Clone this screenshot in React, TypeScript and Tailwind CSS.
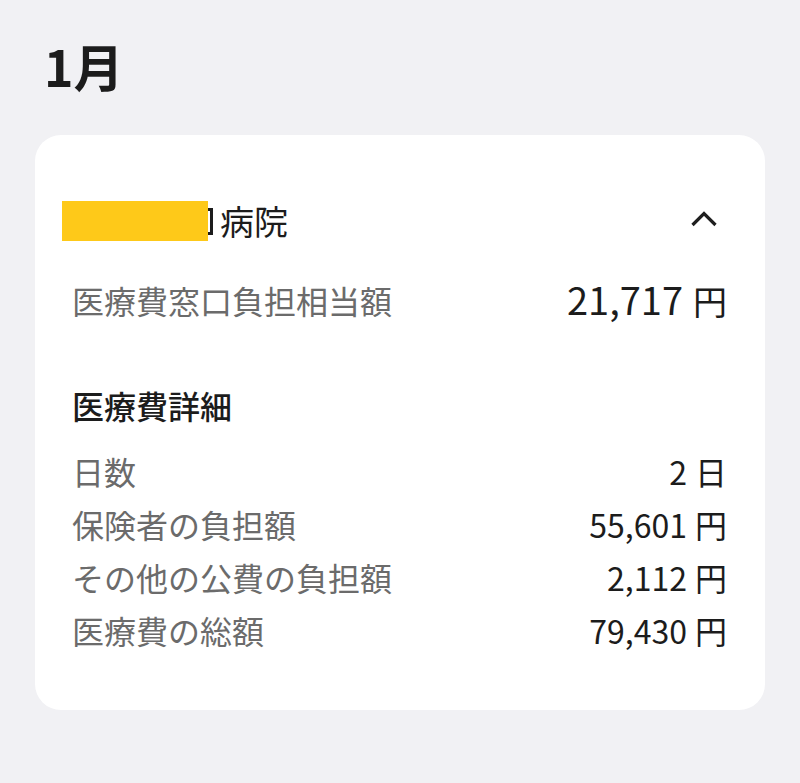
const rows = [
  { label: '日数', value: '2', unit: '日' },
  { label: '保険者の負担額', value: '55,601', unit: '円' },
  { label: 'その他の公費の負担額', value: '2,112', unit: '円' },
  { label: '医療費の総額', value: '79,430', unit: '円' },
];

function ChevronUp() {
  return (
    <svg width="28" height="18" viewBox="0 0 28 18" fill="none">
      <polyline points="2.5,15 14,3.5 25.5,15" stroke="#1f1f1f" strokeWidth="3.2" />
    </svg>
  );
}

export default function App() {
  return (
    <div
      className="min-h-[783px] w-[800px] bg-[#f1f1f4] px-[35px] pt-[33px] text-[#1c1c1c]"
      style={{ fontFamily: '"Noto Sans CJK JP", "Noto Sans", sans-serif' }}
    >
      <h1 className="pl-[9px] text-[50px] font-bold leading-[64px]">1月</h1>

      <div className="mt-[38px] rounded-[26px] bg-white pt-[62px] pb-[53px] pl-[37px] pr-[38px]">
        <div className="flex h-[48px] items-center justify-between">
          <div className="flex items-center text-[34px] leading-[48px]">
            <span className="inline-block h-[40px] w-[146px] -ml-[10px] bg-[#fec919]" />
            <span className="inline-block h-[27px] w-[5px] border-y-[3px] border-r-[3px] border-[#1c1c1c]" />
            <span className="ml-[7px]">病院</span>
          </div>
          <div className="mr-[9px] -mt-[4px]">
            <ChevronUp />
          </div>
        </div>

        <div className="mt-[31px] flex h-[48px] items-center justify-between">
          <span className="text-[32px] leading-[48px] text-[#6b6b6b]">医療費窓口負担相当額</span>
          <span className="text-[38px] leading-[48px]">
            21,717<span className="ml-[10px] text-[34px]">円</span>
          </span>
        </div>

        <div className="mt-[57px] h-[48px] text-[32px] font-medium leading-[48px]">医療費詳細</div>

        <div className="mt-[16px]">
          {rows.map((r) => (
            <div key={r.label} className="flex h-[53px] items-center justify-between">
              <span className="text-[32px] leading-[53px] text-[#6b6b6b]">{r.label}</span>
              <span className="text-[32px] leading-[53px]">
                {r.value}
                <span className="ml-[8px]">{r.unit}</span>
              </span>
            </div>
          ))}
        </div>
      </div>
    </div>
  );
}
